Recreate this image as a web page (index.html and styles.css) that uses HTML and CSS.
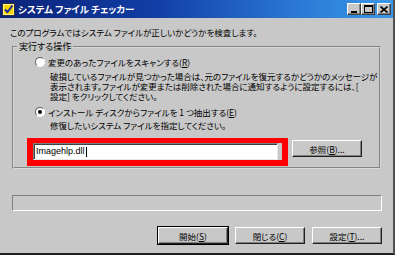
FILE: index.html
```html
<!DOCTYPE html>
<html lang="ja">
<head>
<meta charset="utf-8">
<link rel="stylesheet" href="styles.css">
</head>
<body>
<div class="window">
  <div class="titlebar">
    <svg class="appicon" width="13" height="13" viewBox="0 0 13 13">
      <rect x="0.5" y="0.5" width="12" height="12" fill="#f4d400" stroke="#303030"/>
      <rect x="1.5" y="1.5" width="10" height="10" fill="none" stroke="#fff6a0" stroke-width="1"/>
      <path d="M3 6.5 L5.5 9 L10.5 2.5" fill="none" stroke="#1a2a9c" stroke-width="2"/>
    </svg>
    <span class="title">システム ファイル チェッカー</span>
    <div class="tbtns">
      <span class="tbtn"><svg width="8" height="7" viewBox="0 0 8 7"><rect x="1" y="5" width="6" height="2" fill="#000"/></svg></span>
      <span class="tbtn"><svg width="9" height="8" viewBox="0 0 9 8"><rect x="0.5" y="0.5" width="8" height="7" fill="none" stroke="#000"/><rect x="0" y="0" width="9" height="2" fill="#000"/></svg></span>
      <span class="tbtn close"><svg width="8" height="7" viewBox="0 0 8 7"><path d="M0.5 0.5 L7.5 6.5 M7.5 0.5 L0.5 6.5" stroke="#000" stroke-width="1.6"/></svg></span>
    </div>
  </div>
  <div class="content">
    <p class="intro">このプログラムではシステム ファイルが正しいかどうかを検査します。</p>
    <fieldset class="group">
      <legend>実行する操作</legend>
      <div class="opt"><span class="radio"></span><span>変更のあったファイルをスキャンする(<u>R</u>)</span></div>
      <div class="desc">
        <span class="line">破損しているファイルが見つかった場合は、元のファイルを復元するかどうかのメッセージが</span>
        <span class="line">表示されます。ファイルが変更または削除された場合に通知するように設定するには、[</span>
        <span class="line">設定] をクリックしてください。</span>
      </div>
      <div class="opt opt2"><span class="radio checked"></span><span>インストール ディスクからファイルを 1 つ抽出する(<u>E</u>)</span></div>
      <p class="desc desc2">修復したいシステム ファイルを指定してください。</p>
      <div class="filerow">
        <div class="redbox"><div class="input">Imagehlp.dll<span class="caret"></span></div></div>
        <span class="btn browse">参照(<u>B</u>)...</span>
      </div>
    </fieldset>
    <div class="progress"></div>
    <div class="buttons">
      <span class="btn default">開始(<u>S</u>)</span>
      <span class="btn">閉じる(<u>C</u>)</span>
      <span class="btn">設定(<u>T</u>)...</span>
    </div>
  </div>
</div>
</body>
</html>
```
FILE: styles.css
```css
* { box-sizing: border-box; margin: 0; padding: 0; }
html, body { width: 395px; height: 255px; overflow: hidden; background: #c8c8c8; }
body {
  font-family: "Noto Sans CJK JP", "Noto Sans", sans-serif;
  font-size: 8.5px;
  font-feature-settings: "palt";
  color: #000;
}
u { text-decoration: underline; text-underline-offset: 1px; }
.window {
  width: 395px;
  height: 255px;
  background: #c8c8c8;
  border-right: 2px solid #505050;
  border-bottom: 2px solid #202020;
  display: flex;
  flex-direction: column;
}
.titlebar {
  height: 18px;
  display: flex;
  align-items: center;
  padding-left: 2px;
  background: linear-gradient(to right, #0a2278 0%, #123fa6 40%, #2a78d4 75%, #3a98e8 100%);
  color: #fff;
}
.appicon { flex: none; margin-top: 1px; }
.title {
  margin-left: 3px;
  font-weight: bold;
  font-size: 9.5px;
  line-height: 10px;
}
.tbtns { margin-left: auto; display: flex; margin-right: 2px; }
.tbtn {
  width: 14px;
  height: 12px;
  background: #c8c8c8;
  border: 1px solid;
  border-color: #fff #404040 #404040 #fff;
  box-shadow: inset -1px -1px #808080;
  display: flex;
  align-items: center;
  justify-content: center;
}
.tbtn.close { margin-left: 2px; }
.content { padding: 0 0 0 12px; display: flex; flex-direction: column; }
.intro { margin: 9px 0 0 -2px; line-height: 10px; white-space: nowrap; }
.group {
  margin: 5px 0 0 0;
  width: 369px;
  border: 2px groove #d8d8d8;
  padding: 0 0 1px 0;
  min-width: 0;
}
.group legend {
  margin-left: 3px;
  padding: 0 2px;
  line-height: 10px;
  font-size: 9px;
}
.opt {
  margin-top: 5px;
  padding-left: 21px;
  display: flex;
  align-items: center;
  line-height: 10px;
  height: 10px;
  white-space: nowrap;
}
.radio {
  width: 10px;
  height: 10px;
  border-radius: 50%;
  background: #fff;
  border: 1px solid;
  border-color: #606060 #fff #fff #606060;
  margin-right: 3px;
  display: flex;
  align-items: center;
  justify-content: center;
  flex: none;
}
.radio.checked::after {
  content: "";
  width: 4px;
  height: 4px;
  border-radius: 50%;
  background: #000;
}
.desc {
  margin-top: 4px;
  padding-left: 36px;
  line-height: 10px;
  white-space: nowrap;
  display: flex;
  flex-direction: column;
}
.desc .line { display: block; height: 10px; }
.opt2 { margin-top: 6px; }
.desc2 { margin-top: 3px; }
.filerow { margin-top: 8px; display: flex; align-items: flex-start; padding-left: 13px; }
.redbox {
  width: 261px;
  height: 28px;
  border: 6px solid #ff0000;
  border-top-width: 5px;
  padding: 0 4px 0 0;
}
.input {
  height: 17px;
  background: #fff;
  border: 1px solid;
  border-color: #808080 #e8e8e8 #e8e8e8 #808080;
  box-shadow: inset 1px 1px #404040;
  font-family: "Liberation Sans", Arial, sans-serif;
  font-size: 9px;
  line-height: 15px;
  padding-left: 2px;
  display: flex;
  align-items: center;
}
.caret { width: 1px; height: 10px; background: #000; margin-left: 1px; }
.btn {
  width: 70px;
  height: 17px;
  background: #c8c8c8;
  border: 1px solid;
  border-color: #fff #202020 #202020 #fff;
  box-shadow: inset -1px -1px #808080;
  display: flex;
  align-items: center;
  justify-content: center;
  line-height: 10px;
  white-space: nowrap;
}
.browse { margin-left: 4px; margin-top: 2px; }
.progress {
  margin-top: 26px;
  width: 370px;
  height: 16px;
  border: 1px solid;
  border-color: #808080 #fff #fff #808080;
}
.buttons {
  margin-top: 16px;
  width: 370px;
  display: flex;
  justify-content: flex-end;
  gap: 7px;
}
.btn.default { outline: 1px solid #000; }
```
